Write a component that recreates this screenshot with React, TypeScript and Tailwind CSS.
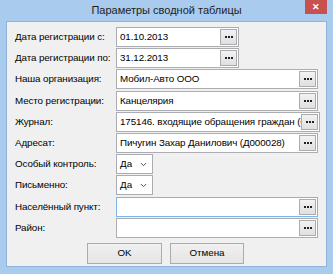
import { ChevronDown } from 'lucide-react';

const font = { fontFamily: '"Liberation Sans", Arial, sans-serif' };

function Dots() {
  return (
    <div className="flex h-[16px] w-[17px] shrink-0 items-center justify-center border border-[#acacac] bg-gradient-to-b from-[#f2f2f2] to-[#e0e0e0]">
      <div className="flex gap-[1px]">
        <span className="h-[2px] w-[2px] bg-[#222]" />
        <span className="h-[2px] w-[2px] bg-[#222]" />
        <span className="h-[2px] w-[2px] bg-[#222]" />
      </div>
    </div>
  );
}

function PickField({ value, wide = true, focused = false }: { value: string; wide?: boolean; focused?: boolean }) {
  return (
    <div
      className={`flex h-[20px] items-center border bg-white pl-[3px] pr-[1px] ${wide ? 'w-[204px]' : 'w-[123px]'} ${
        focused ? 'border-[#7eb4ea]' : 'border-[#abadb3]'
      }`}
    >
      <span className="flex-1 overflow-hidden whitespace-nowrap text-[9.8px] leading-none tracking-[-0.1px] text-black">{value}</span>
      <Dots />
    </div>
  );
}

function Combo({ value }: { value: string }) {
  return (
    <div className="flex h-[20px] w-[37px] items-center border border-[#abadb3] bg-white pl-[3px] pr-[4px]">
      <span className="flex-1 text-[9.8px] leading-none text-black">{value}</span>
      <ChevronDown size={9} strokeWidth={2.5} className="text-[#444]" />
    </div>
  );
}

const rows: { label: string; field: JSX.Element }[] = [
  { label: 'Дата регистрации с:', field: <PickField value="01.10.2013" wide={false} /> },
  { label: 'Дата регистрации по:', field: <PickField value="31.12.2013" wide={false} /> },
  { label: 'Наша организация:', field: <PickField value="Мобил-Авто ООО" /> },
  { label: 'Место регистрации:', field: <PickField value="Канцелярия" /> },
  { label: 'Журнал:', field: <PickField value="175146. входящие обращения граждан (ОД000" /> },
  { label: 'Адресат:', field: <PickField value="Пичугин Захар Данилович (Д000028)" /> },
  { label: 'Особый контроль:', field: <Combo value="Да" /> },
  { label: 'Письменно:', field: <Combo value="Да" /> },
  { label: 'Населённый пункт:', field: <PickField value="" focused /> },
  { label: 'Район:', field: <PickField value="" /> },
];

export default function App() {
  return (
    <div className="flex h-[274px] w-[333px] flex-col bg-[#a9cbee]" style={font}>
      {/* title bar */}
      <div className="relative flex h-[21px] shrink-0 items-center justify-center">
        <span className="text-[11px] leading-none text-[#1e1e1e]">Параметры сводной таблицы</span>
        <div className="absolute right-[6px] top-0 flex h-[14px] w-[22px] items-center justify-center bg-[#c75050]">
          <span className="text-[9px] font-bold leading-none text-white">✕</span>
        </div>
      </div>

      {/* client area */}
      <div className="mx-[6px] mb-[7px] flex flex-1 flex-col border border-[#8fb2d8] bg-[#f0f0f0] pl-[8px] pr-[8px] pt-[5px]">
        <div className="flex flex-col gap-[1.2px]">
          {rows.map(row => (
            <div key={row.label} className="flex h-[20px] items-center">
              <span className="w-[101px] shrink-0 whitespace-nowrap text-[9.8px] leading-none tracking-[-0.1px] text-black">{row.label}</span>
              {row.field}
            </div>
          ))}
        </div>

        <div className="mt-[5px] flex justify-center gap-[8px] pr-[2px]">
          <button className="h-[21px] w-[75px] border border-[#acacac] bg-gradient-to-b from-[#f0f0f0] to-[#e5e5e5] text-[9.8px] text-black">
            OK
          </button>
          <button className="h-[21px] w-[74px] border border-[#acacac] bg-gradient-to-b from-[#f0f0f0] to-[#e5e5e5] text-[9.8px] text-black">
            Отмена
          </button>
        </div>
      </div>
    </div>
  );
}
